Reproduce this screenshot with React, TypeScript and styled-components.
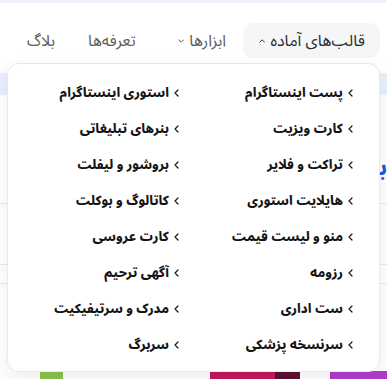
import React from "react";
import styled, { createGlobalStyle } from "styled-components";

const Global = createGlobalStyle`
  html, body { margin: 0; padding: 0; background: #ffffff; }
  body { width: 387px; height: 379px; overflow: hidden; font-family: "Noto Sans Arabic", "DejaVu Sans", sans-serif; }
  * { box-sizing: border-box; }
`;

const Page = styled.div`
  position: relative;
  width: 387px;
  height: 379px;
  overflow: hidden;
  background: #ffffff;
  direction: rtl;
`;

const TopStrip = styled.div`
  height: 3px;
  background: #eef3fb;
`;

const Nav = styled.nav`
  display: flex;
  align-items: flex-end;
  height: 60px;
  padding: 0 7px 5px 0;
`;

const NavItem = styled.div<{ $active?: boolean; $space?: number }>`
  display: flex;
  align-items: center;
  gap: 5px;
  height: 35px;
  padding: ${(p) => (p.$active ? "0 15px 0 16px" : "0")};
  margin-right: ${(p) => p.$space ?? 0}px;
  border-radius: 10px;
  background: ${(p) => (p.$active ? "#f5f6f8" : "transparent")};
  color: ${(p) => (p.$active ? "#2b2b2b" : "#5c5c5c")};
  font-size: 16px;
  white-space: nowrap;
`;

const Behind = styled.div`
  display: flex;
  flex-direction: column;
`;

const Banner = styled.div`
  height: 22px;
  margin-top: 10px;
  background: #e9f0fc;
`;

const Heading = styled.div`
  height: 50px;
  margin-top: 48px;
  color: #1a56db;
  font-weight: 700;
  font-size: 22px;
  line-height: 50px;
`;

const Divider = styled.div<{ $space: number }>`
  height: 1px;
  margin-top: ${(p) => p.$space}px;
  background: #e6e8ec;
`;

const ImageStrip = styled.div`
  position: absolute;
  left: 0;
  right: 0;
  bottom: 0;
  height: 8px;
  display: flex;
  direction: ltr;
`;

const Img = styled.div<{ $w: number; $c: string; $ml?: number }>`
  width: ${(p) => p.$w}px;
  margin-left: ${(p) => p.$ml ?? 0}px;
  background: ${(p) => p.$c};
`;

const Dropdown = styled.div`
  position: absolute;
  top: 63px;
  left: 7px;
  width: 373px;
  height: 309px;
  background: #ffffff;
  border: 1px solid #e7e9ee;
  border-radius: 12px;
  box-shadow: 0 6px 18px rgba(30, 40, 60, 0.08);
  padding: 11px 26px 0 20px;
  display: grid;
  grid-template-columns: 174px 1fr;
  grid-auto-rows: 36px;
  direction: rtl;
`;

const MenuItem = styled.div`
  display: flex;
  align-items: center;
  gap: 5px;
  font-size: 13px;
  font-weight: 800;
  color: #151515;
  white-space: nowrap;
`;

const Chevron = ({ dir, size = 1 }: { dir: "left" | "up" | "down"; size?: number }) => {
  const d =
    dir === "left"
      ? "M4 1 L1 4 L4 7"
      : dir === "up"
      ? "M1 4 L4 1 L7 4"
      : "M1 1 L4 4 L7 1";
  const w = dir === "left" ? 5 : 8;
  const h = dir === "left" ? 8 : 5;
  return (
    <svg width={w * size} height={h * size} viewBox={`0 0 ${w} ${h}`} fill="none">
      <path d={d} stroke="currentColor" strokeWidth="1.2" strokeLinecap="round" strokeLinejoin="round" />
    </svg>
  );
};

const items: [string, string][] = [
  ["پست اینستاگرام", "استوری اینستاگرام"],
  ["کارت ویزیت", "بنرهای تبلیغاتی"],
  ["تراکت و فلایر", "بروشور و لیفلت"],
  ["هایلایت استوری", "کاتالوگ و بوکلت"],
  ["منو و لیست قیمت", "کارت عروسی"],
  ["رزومه", "آگهی ترحیم"],
  ["ست اداری", "مدرک و سرتیفیکیت"],
  ["سرنسخه پزشکی", "سربرگ"],
];

export default function App() {
  return (
    <>
      <Global />
      <Page>
        <TopStrip />
        <Nav>
          <NavItem $active>
            <span>قالب‌های آماده</span>
            <Chevron dir="up" size={0.8} />
          </NavItem>
          <NavItem $space={17}>
            <span>ابزارها</span>
            <Chevron dir="down" size={0.8} />
          </NavItem>
          <NavItem $space={42}>
            <span>تعرفه‌ها</span>
          </NavItem>
          <NavItem $space={33}>
            <span>بلاگ</span>
          </NavItem>
        </Nav>
        <Behind>
          <Banner />
          <Heading>بن</Heading>
          <Divider $space={10} />
          <Divider $space={60} />
          <Divider $space={18} />
        </Behind>
        <ImageStrip>
          <Img $w={23} $c="#8bc34a" $ml={40} />
          <Img $w={65} $c="#c2185b" $ml={147} />
          <Img $w={25} $c="#5a1030" />
          <Img $w={57} $c="#b03cc8" $ml={30} />
        </ImageStrip>
        <Dropdown>
          {items.flat().map((t, i) => (
            <MenuItem key={i}>
              <Chevron dir="left" />
              <span>{t}</span>
            </MenuItem>
          ))}
        </Dropdown>
      </Page>
    </>
  );
}
